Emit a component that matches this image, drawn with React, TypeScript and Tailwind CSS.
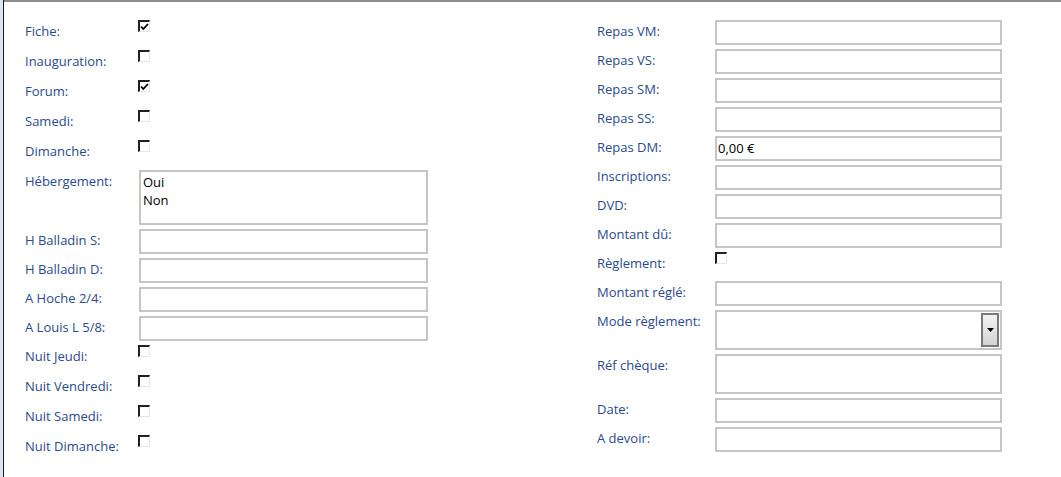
import React from "react";

const labelCls =
  "text-[#2a4a8c] text-[13px] font-medium leading-[17px] pt-[3px] whitespace-nowrap";

function Check({ checked }: { checked?: boolean }) {
  return (
    <div className="w-[12px] h-[12px] bg-white border-t-2 border-l-2 border-t-[#202020] border-l-[#202020] border-r border-b border-r-[#e6e6e6] border-b-[#e6e6e6] flex items-center justify-center">
      {checked && (
        <svg width="9" height="8" viewBox="0 0 9 8">
          <path d="M1 3.5 L3.3 6 L8 1" stroke="#000" strokeWidth="1.8" fill="none" />
        </svg>
      )}
    </div>
  );
}

function Box({ h = 25, children }: { h?: number; children?: React.ReactNode }) {
  return (
    <div
      className="border-2 border-[#c6c6c6] bg-white w-full text-black text-[13px] leading-[17px] px-[1px] pt-[2px]"
      style={{ height: h }}
    >
      {children}
    </div>
  );
}

function LeftRow({ label, h, children }: { label: string; h: number; children: React.ReactNode }) {
  return (
    <div className="flex items-start" style={{ height: h }}>
      <div className={`w-[113px] ${labelCls}`}>{label}</div>
      <div className="flex-1">{children}</div>
    </div>
  );
}

function RightRow({ label, h, children }: { label: string; h: number; children: React.ReactNode }) {
  return (
    <div className="flex items-start" style={{ height: h }}>
      <div className={`w-[118px] ${labelCls}`}>{label}</div>
      <div className="flex-1">{children}</div>
    </div>
  );
}

export default function App() {
  return (
    <div
      className="w-[1061px] h-[477px] bg-white flex overflow-hidden"
      style={{ fontFamily: '"Open Sans", "Noto Sans", sans-serif' }}
    >
      <div className="w-[3px] h-full bg-[#dce6f2]" />
      <div className="w-px h-full bg-[#1a1a1a]" />
      <div className="flex-1 flex flex-col">
        <div className="h-[2px] bg-[#8c8c8c]" />
        <div className="flex pt-[18px]">
          {/* Left column */}
          <div className="ml-[21px] w-[403px] flex flex-col">
            <LeftRow label="Fiche:" h={30}><Check checked /></LeftRow>
            <LeftRow label="Inauguration:" h={30}><Check /></LeftRow>
            <LeftRow label="Forum:" h={30}><Check checked /></LeftRow>
            <LeftRow label="Samedi:" h={30}><Check /></LeftRow>
            <LeftRow label="Dimanche:" h={30}><Check /></LeftRow>
            <LeftRow label="Hébergement:" h={59}>
              <div className="ml-px">
                <div className="border-2 border-[#c6c6c6] h-[55px] px-[2px] pt-[1px] text-[13px] leading-[18px] text-black">
                  <div>Oui</div>
                  <div>Non</div>
                </div>
              </div>
            </LeftRow>
            <LeftRow label="H Balladin S:" h={29}><div className="ml-px"><Box /></div></LeftRow>
            <LeftRow label="H Balladin D:" h={29}><div className="ml-px"><Box /></div></LeftRow>
            <LeftRow label="A Hoche 2/4:" h={29}><div className="ml-px"><Box /></div></LeftRow>
            <LeftRow label="A Louis L 5/8:" h={29}><div className="ml-px"><Box /></div></LeftRow>
            <LeftRow label="Nuit Jeudi:" h={30}><Check /></LeftRow>
            <LeftRow label="Nuit Vendredi:" h={30}><Check /></LeftRow>
            <LeftRow label="Nuit Samedi:" h={30}><Check /></LeftRow>
            <LeftRow label="Nuit Dimanche:" h={30}><Check /></LeftRow>
          </div>
          {/* Right column */}
          <div className="ml-[169px] w-[405px] flex flex-col">
            <RightRow label="Repas VM:" h={29}><Box /></RightRow>
            <RightRow label="Repas VS:" h={29}><Box /></RightRow>
            <RightRow label="Repas SM:" h={29}><Box /></RightRow>
            <RightRow label="Repas SS:" h={29}><Box /></RightRow>
            <RightRow label="Repas DM:" h={29}><Box>0,00 €</Box></RightRow>
            <RightRow label="Inscriptions:" h={29}><Box /></RightRow>
            <RightRow label="DVD:" h={29}><Box /></RightRow>
            <RightRow label="Montant dû:" h={29}><Box /></RightRow>
            <RightRow label="Règlement:" h={29}>
              <div className="pt-[0px]"><Check /></div>
            </RightRow>
            <RightRow label="Montant réglé:" h={29}><Box /></RightRow>
            <RightRow label="Mode règlement:" h={44}>
              <div className="border-2 border-[#c6c6c6] h-[40px] w-full flex justify-end items-stretch p-[1px]">
                <div className="w-[18px] border-2 border-[#7a7a7a] bg-gradient-to-b from-[#f4f4f4] to-[#d4d4d4] flex items-center justify-center">
                  <svg width="7" height="4" viewBox="0 0 7 4">
                    <path d="M0 0 H7 L3.5 4 Z" fill="#000" />
                  </svg>
                </div>
              </div>
            </RightRow>
            <RightRow label="Réf chèque:" h={44}><Box h={40} /></RightRow>
            <RightRow label="Date:" h={29}><Box /></RightRow>
            <RightRow label="A devoir:" h={29}><Box /></RightRow>
          </div>
        </div>
      </div>
    </div>
  );
}
